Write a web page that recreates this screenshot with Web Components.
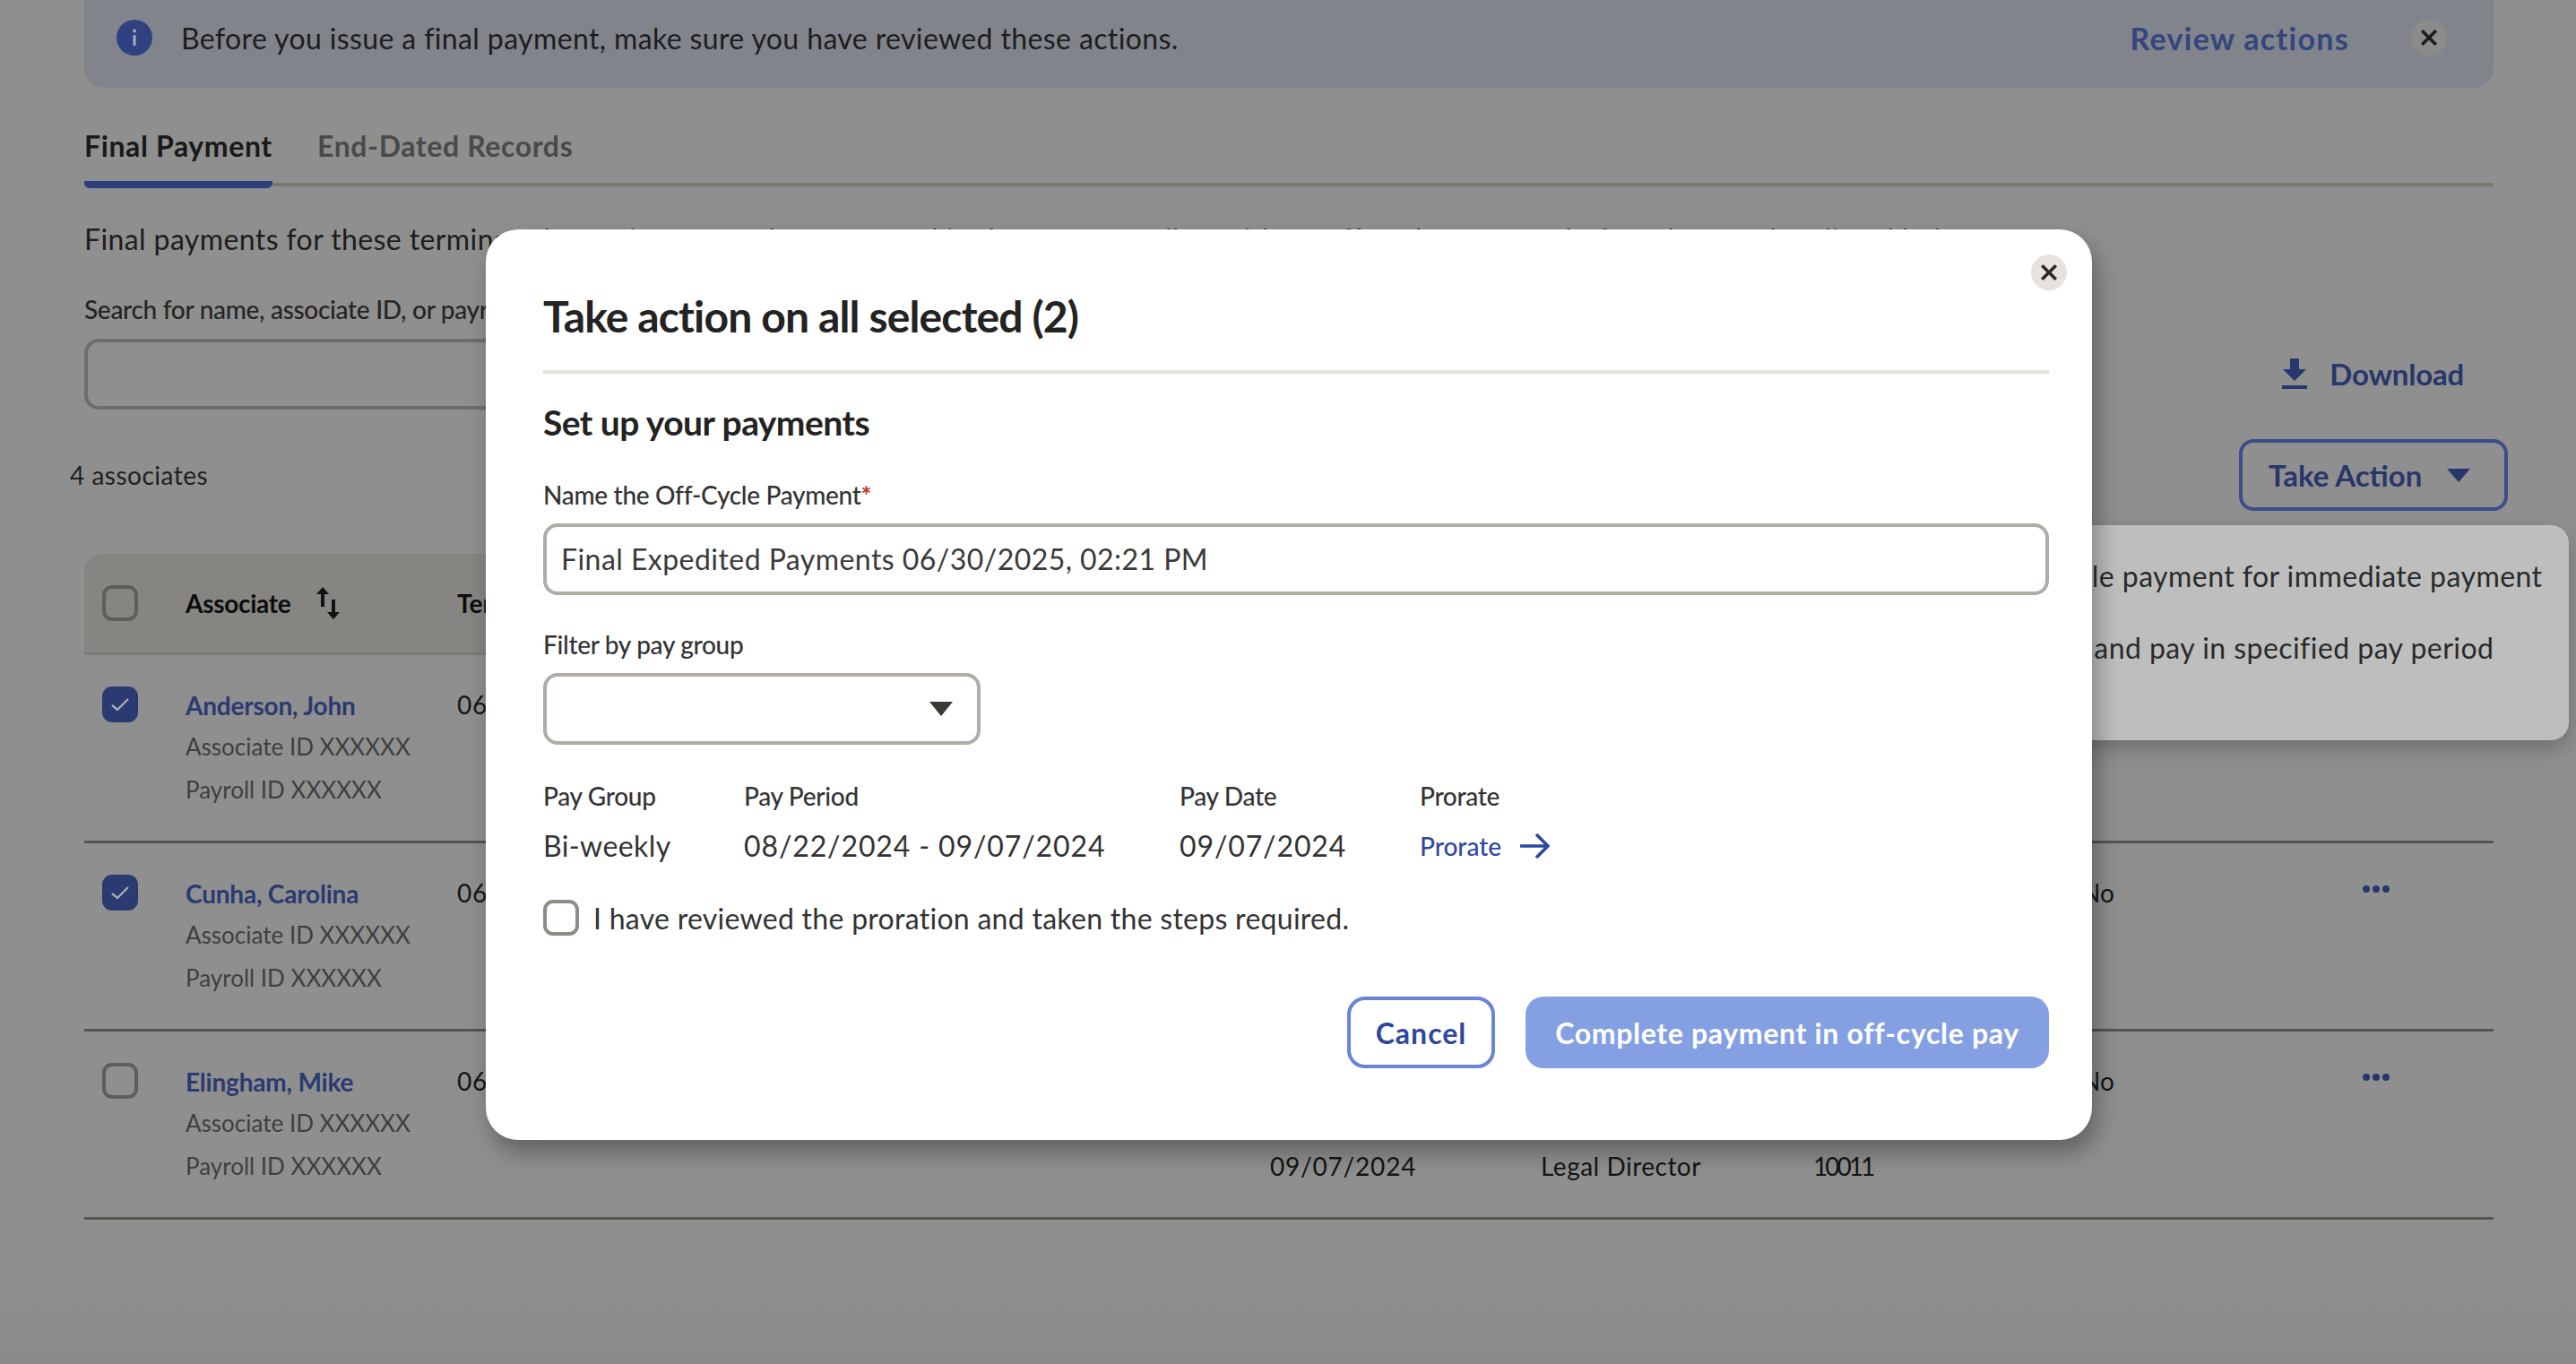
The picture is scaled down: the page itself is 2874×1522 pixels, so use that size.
<!DOCTYPE html>
<html lang="en">
<head>
<meta charset="utf-8">
<title>Final Payment</title>
<style>
  html, body { margin: 0; padding: 0; }
  body {
    width: 2874px; height: 1522px; overflow: hidden;
    background: linear-gradient(#8f8f8f 0, #8f8f8f 1440px, #898989 100%);
    font-family: Lato, "Liberation Sans", sans-serif; color: #1d1d1d;
  }
</style>
</head>
<body>
<fp-page></fp-page>
<script>
const CLOSE_X = `<svg width="20" height="20" viewBox="0 0 20 20"><path d="M3.5 3.5 16.5 16.5M16.5 3.5 3.5 16.5" stroke="currentColor" stroke-width="3.6" stroke-linecap="square" fill="none"/></svg>`;

class FpCheck extends HTMLElement {
  connectedCallback() {
    const on = this.hasAttribute("checked");
    this.attachShadow({ mode: "open" }).innerHTML = `
      <style>
        :host { display:block; width:40px; height:40px; box-sizing:border-box; border-radius:11px;
          border:4px solid var(--check-border, #5f5e5c); }
        :host([checked]) { background:#2b3a70; border-color:#2b3a70; }
        svg { display:block; margin:2px 0 0 2px; }
      </style>
      ${on ? `<svg width="28" height="28" viewBox="0 0 28 28"><path d="M5 15l6 5L23 8" stroke="#a9acb8" stroke-width="2.4" fill="none"/></svg>` : ""}`;
  }
}

class FpBanner extends HTMLElement {
  connectedCallback() {
    this.attachShadow({ mode: "open" }).innerHTML = `
      <style>
        :host { display:flex; align-items:center; height:98px; box-sizing:border-box; padding:0 52px 14px 36px;
          background:#81848a; border-radius:0 0 22px 22px; }
        .i { width:40px; height:40px; flex:none; }
        .msg { margin-left:32px; font-size:32px; letter-spacing:.38px; flex:1; color:#1d1d1f; }
        .review { font-size:34px; font-weight:700; color:#33467f; letter-spacing:1.3px; }
        .x { width:40px; height:40px; border-radius:50%; background:#8b8b89; margin-left:69px; color:#1c1c1c;
          display:flex; align-items:center; justify-content:center; }
      </style>
      <svg class="i" viewBox="0 0 40 40"><circle cx="20" cy="20" r="20" fill="#2f4180"/><rect x="18.4" y="17" width="3.2" height="12" rx="1" fill="#a5a9b5"/><circle cx="20" cy="12.5" r="2" fill="#a5a9b5"/></svg>
      <div class="msg">Before you issue a final payment, make sure you have reviewed these actions.</div>
      <div class="review">Review actions</div>
      <div class="x">${CLOSE_X}</div>`;
  }
}

class FpTabs extends HTMLElement {
  connectedCallback() {
    this.attachShadow({ mode: "open" }).innerHTML = `
      <style>
        :host { display:flex; gap:50px; height:112px; box-sizing:border-box; padding-top:44px; font-size:32px; font-weight:700; letter-spacing:.62px;
          background:linear-gradient(#797972,#797972) 0 calc(100% - 2px)/100% 4px no-repeat; }
        div { height:68px; line-height:42px; box-sizing:border-box; color:#4a4a48; }
        .on { color:#191919; width:210px; border-bottom:8px solid #2d3f7c; border-radius:0 0 6px 6px; }
      </style>
      <div class="on">Final Payment</div><div>End-Dated Records</div>`;
  }
}

class FpToolbar extends HTMLElement {
  connectedCallback() {
    this.attachShadow({ mode: "open" }).innerHTML = `
      <style>
        :host { display:block; }
        .desc { margin-top:37px; font-size:32px; line-height:40px; letter-spacing:.4px; white-space:nowrap; color:#1d1d1d; }
        .search { display:flex; justify-content:space-between; align-items:flex-end; margin-top:40px; }
        label { display:block; font-size:28px; line-height:36px; font-weight:500; color:#242424; letter-spacing:-.3px; }
        .box { width:1400px; height:79px; margin-top:15px; box-sizing:border-box; border:4px solid #6f6d6b; border-radius:16px; }
        .dl { display:flex; align-items:center; gap:25px; margin:0 33px 20px 0; font-size:33px; font-weight:700; letter-spacing:-.2px; color:#28376b; }
        .count { display:flex; justify-content:space-between; align-items:center; margin:33px -16px 0; height:80px; font-size:28px; letter-spacing:.5px; color:#1f1f1f; }
        .take { display:flex; align-items:center; gap:28px; width:300px; height:80px; box-sizing:border-box; padding-left:29px;
          border:4px solid #3a4f8a; border-radius:16px; font-size:33px; font-weight:700; letter-spacing:0; color:#28376b; }
      </style>
      <div class="desc">Final payments for these terminated associates must be processed in the next payroll or with an off-cycle payment before the pay date listed below.</div>
      <div class="search">
        <div><label>Search for name, associate ID, or payroll ID</label><div class="box"></div></div>
        <div class="dl">
          <svg width="28" height="34" viewBox="0 0 28 34"><path d="M9 0h10v12h8L14 25 1 12h8zM0 30h28v4H0z" fill="#28376b"/></svg>
          Download
        </div>
      </div>
      <div class="count">
        <span>4 associates</span>
        <div class="take">Take Action
          <svg width="26" height="15" viewBox="0 0 26 15"><path d="M0 0h26L13 15z" fill="#28376b"/></svg>
        </div>
      </div>`;
  }
}

const COLS = "93px 303px 907px 302px 304px 299px 314px 1fr";

class FpTableHead extends HTMLElement {
  connectedCallback() {
    this.attachShadow({ mode: "open" }).innerHTML = `
      <style>
        :host { display:grid; grid-template-columns:${COLS}; align-items:center; height:113px; box-sizing:border-box;
          padding-left:20px; margin-top:48px; background:#878582; border-bottom:3px solid #7b7a76; border-radius:20px 20px 0 0;
          font-size:28px; font-weight:700; color:#0c0c0c; }
        .a { display:flex; align-items:center; gap:29px; letter-spacing:-.3px; }
      </style>
      <fp-check></fp-check>
      <div class="a">Associate
        <svg width="26" height="36" viewBox="0 0 26 36"><path d="M7 0l7 8H9v14H5V8H0zM19 36l7-8h-5V14h-4v14h-5z" fill="#111"/></svg>
      </div>
      <div>Termination</div>`;
  }
}

class FpRow extends HTMLElement {
  connectedCallback() {
    const a = (n) => this.getAttribute(n) || "&nbsp;";
    const dots = `<svg width="30" height="10" viewBox="0 0 30 10"><circle cx="4" cy="5" r="4"/><circle cx="15" cy="5" r="4"/><circle cx="26" cy="5" r="4"/></svg>`;
    this.attachShadow({ mode: "open" }).innerHTML = `
      <style>
        :host { display:grid; grid-template-columns:${COLS}; height:210px; box-sizing:border-box; padding:37px 0 0 20px;
          border-bottom:3px solid #555550; font-size:28px; line-height:47.5px; color:#141414; }
        fp-check { margin-top:-2px; }
        .name { font-weight:700; color:#2b3a70; letter-spacing:-.2px; line-height:46px; }
        .sub { color:#3f3f3f; font-size:26px; }
        .who { margin-top:-4px; }
        .cell { line-height:47.5px; margin-top:-5px; }
        .date { letter-spacing:.8px; }
        .title { letter-spacing:.5px; }
        .code { letter-spacing:-3px; }
        .act svg { display:block; margin-top:8px; fill:#28376b; }
        .act { margin-top:1px; }
      </style>
      <fp-check ${this.hasAttribute("checked") ? "checked" : ""}></fp-check>
      <div class="who"><div class="name">${a("name")}</div><div class="sub">Associate ID XXXXXX</div><div class="sub">Payroll ID XXXXXX</div></div>
      <div class="cell date">${a("term")}</div>
      <div class="cell date">&nbsp;<br>&nbsp;<br>${a("date")}</div>
      <div class="cell title">&nbsp;<br>&nbsp;<br>${a("title")}</div>
      <div class="cell code">&nbsp;<br>&nbsp;<br>${a("code")}</div>
      <div class="cell">${a("flag")}</div>
      <div class="act">${this.hasAttribute("more") ? dots : ""}</div>`;
  }
}

class FpMenu extends HTMLElement {
  connectedCallback() {
    this.attachShadow({ mode: "open" }).innerHTML = `
      <style>
        :host { position:absolute; top:586px; right:8px; width:800px; height:240px; box-sizing:border-box; padding:37px 0 0 162px;
          background:#bebebe; border-radius:20px; box-shadow:0 10px 22px rgba(0,0,0,.22); font-size:32px; line-height:40px; letter-spacing:.45px; color:#2a2a2a; white-space:nowrap; }
        div { margin-bottom:40px; }
        div + div { margin-left:-4px; }
      </style>
      <div>Schedule payment for immediate payment</div>
      <div>Review and pay in specified pay period</div>`;
  }
}

class FpModal extends HTMLElement {
  connectedCallback() {
    this.attachShadow({ mode: "open" }).innerHTML = `
      <style>
        :host { position:absolute; left:542px; top:256px; width:1792px; height:1016px; box-sizing:border-box; padding:0 48px 0 64px;
          background:#fff; border-radius:36px; box-shadow:6px 14px 26px rgba(0,0,0,.32); color:#333; }
        .close { position:absolute; right:28px; top:28px; width:40px; height:40px; border-radius:50%; background:#e6e3de; color:#2b2a28;
          display:flex; align-items:center; justify-content:center; }
        h2 { margin:0; padding-top:64px; height:161px; box-sizing:border-box; border-bottom:4px solid #e3e0db;
          font-size:48px; line-height:66px; font-weight:700; color:#232323; letter-spacing:-.85px; }
        h3 { margin:29px 0 0; font-size:39px; line-height:50px; font-weight:700; color:#232323; letter-spacing:-.55px; }
        label { display:block; font-size:28px; line-height:36px; font-weight:500; color:#333; letter-spacing:-.3px; }
        label b { color:#c0392b; font-weight:700; }
        .l1 { margin-top:38px; }
        .l2 { margin-top:37px; }
        .input { height:80px; box-sizing:border-box; margin-top:14px; padding-left:16px; border:4px solid #b0aca6; border-radius:16px;
          font-size:32px; line-height:72px; letter-spacing:.45px; color:#3a3a3a; }
        .select { width:488px; height:80px; box-sizing:border-box; margin-top:14px; border:4px solid #b0aca6; border-radius:16px;
          display:flex; align-items:center; justify-content:flex-end; padding-right:27px; }
        .info { display:grid; grid-template-columns:224px 486px 268px 1fr; margin-top:36px; font-size:32px; color:#333; }
        .info span { font-size:28px; line-height:42px; letter-spacing:-.3px; font-weight:500; margin-bottom:14px; }
        .info div { line-height:42px; letter-spacing:.88px; }
        .info div.txt { letter-spacing:.4px; }
        .info div.link { display:flex; align-items:center; gap:20px; font-size:28px; font-weight:500; letter-spacing:0; color:#2f479f; }
        .ok { display:flex; align-items:center; gap:16px; margin-top:39px; font-size:32px; letter-spacing:.28px; color:#333; --check-border:#8f8b85; }
        .foot { display:flex; justify-content:flex-end; gap:34px; margin-top:68px; }
        .btn { height:80px; box-sizing:border-box; border-radius:20px; display:flex; align-items:center; justify-content:center; font-size:32px; font-weight:700; }
        .cancel { width:165px; border:4px solid #6b84d8; letter-spacing:1px; color:#2f479f; }
        .go { width:584px; background:#85a0e2; letter-spacing:.67px; color:#fff; }
      </style>
      <div class="close">${CLOSE_X}</div>
      <h2>Take action on all selected (2)</h2>
      <h3>Set up your payments</h3>
      <label class="l1">Name the Off-Cycle Payment<b>*</b></label>
      <div class="input">Final Expedited Payments 06/30/2025, 02:21 PM</div>
      <label class="l2">Filter by pay group</label>
      <div class="select"><svg width="26" height="16" viewBox="0 0 26 16"><path d="M0 0h26L13 16z" fill="#3a3835"/></svg></div>
      <div class="info">
        <span>Pay Group</span><span>Pay Period</span><span>Pay Date</span><span>Prorate</span>
        <div class="txt">Bi-weekly</div><div>08/22/2024 - 09/07/2024</div><div>09/07/2024</div>
        <div class="link">Prorate <svg width="34" height="30" viewBox="0 0 34 30"><path d="M1 15h30M19 2l13 13-13 13" stroke="#2f479f" stroke-width="3.6" fill="none"/></svg></div>
      </div>
      <div class="ok"><fp-check></fp-check>I have reviewed the proration and taken the steps required.</div>
      <div class="foot"><div class="btn cancel">Cancel</div><div class="btn go">Complete payment in off-cycle pay</div></div>`;
  }
}

class FpPage extends HTMLElement {
  connectedCallback() {
    this.attachShadow({ mode: "open" }).innerHTML = `
      <style>
        :host { display:block; box-sizing:border-box; width:2874px; height:1522px; padding:0 92px 0 94px; position:relative; }
      </style>
      <fp-banner></fp-banner>
      <fp-tabs></fp-tabs>
      <fp-toolbar></fp-toolbar>
      <fp-table-head></fp-table-head>
      <fp-row name="Anderson, John" term="06/30/2025" checked></fp-row>
      <fp-row name="Cunha, Carolina" term="06/30/2025" flag="No" more checked></fp-row>
      <fp-row name="Elingham, Mike" term="06/30/2025" date="09/07/2024" title="Legal Director" code="10011" flag="No" more></fp-row>
      <fp-menu></fp-menu>
      <fp-modal></fp-modal>`;
  }
}

customElements.define("fp-check", FpCheck);
customElements.define("fp-banner", FpBanner);
customElements.define("fp-tabs", FpTabs);
customElements.define("fp-toolbar", FpToolbar);
customElements.define("fp-table-head", FpTableHead);
customElements.define("fp-row", FpRow);
customElements.define("fp-menu", FpMenu);
customElements.define("fp-modal", FpModal);
customElements.define("fp-page", FpPage);
</script>
</body>
</html>
